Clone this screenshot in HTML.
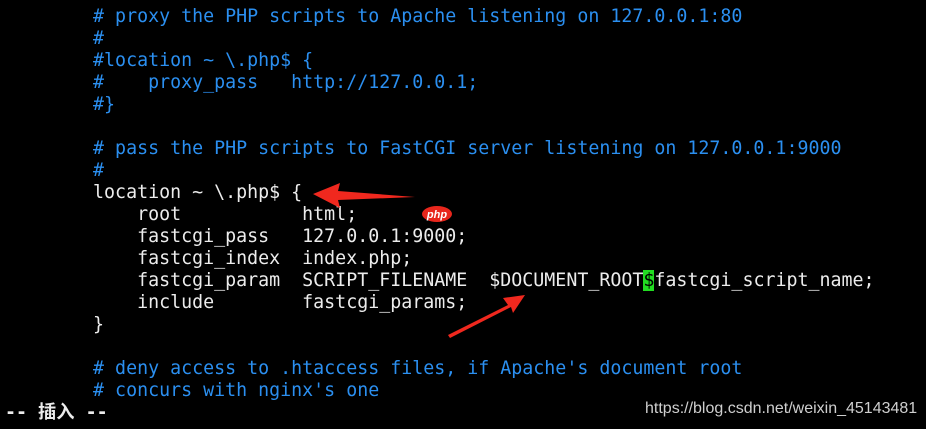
<!DOCTYPE html>
<html><head><meta charset="utf-8"><style>
html,body{margin:0;padding:0;background:#000;width:926px;height:429px;overflow:hidden;position:relative}
pre{position:absolute;left:5px;top:6px;margin:0;font-family:"DejaVu Sans Mono","Liberation Mono","Noto Sans CJK SC",monospace;font-size:18.3px;line-height:22px;color:#ececec}
.c{color:#2b8ff0}
.cur{background:#22dd22;color:#000}
.b{font-weight:bold}
.wm{position:absolute;left:645px;top:400px;font-family:"Liberation Sans",sans-serif;font-size:16px;color:#cfcfcf}
svg{position:absolute;left:0;top:0}
</style></head><body>
<pre><span class="c">        # proxy the PHP scripts to Apache listening on 127.0.0.1:80
        #
        #location ~ \.php$ {
        #    proxy_pass   http://127.0.0.1;
        #}</span>

<span class="c">        # pass the PHP scripts to FastCGI server listening on 127.0.0.1:9000
        #</span>
        location ~ \.php$ {
            root           html;
            fastcgi_pass   127.0.0.1:9000;
            fastcgi_index  index.php;
            fastcgi_param  SCRIPT_FILENAME  $DOCUMENT_ROOT<span class="cur">$</span>fastcgi_script_name;
            include        fastcgi_params;
        }

<span class="c">        # deny access to .htaccess files, if Apache's document root
        # concurs with nginx's one</span>
<span class="b">-- 插入 --</span></pre>
<svg width="926" height="429">
<polygon points="313,194 340,183 338,191 415,197 338,200 340,208" fill="#f0281e"/>
<polygon points="448,335 508,305 503,298 525,295 513,313 511,307 450,338" fill="#f0281e"/>
<ellipse cx="437" cy="214" rx="15" ry="8" fill="#e8261c"/>
<text x="437" y="218" text-anchor="middle" font-family="Liberation Sans" font-style="italic" font-weight="bold" font-size="11" fill="#fff">php</text>
</svg>
<div class="wm">https://blog.csdn.net/weixin_45143481</div>
</body></html>
